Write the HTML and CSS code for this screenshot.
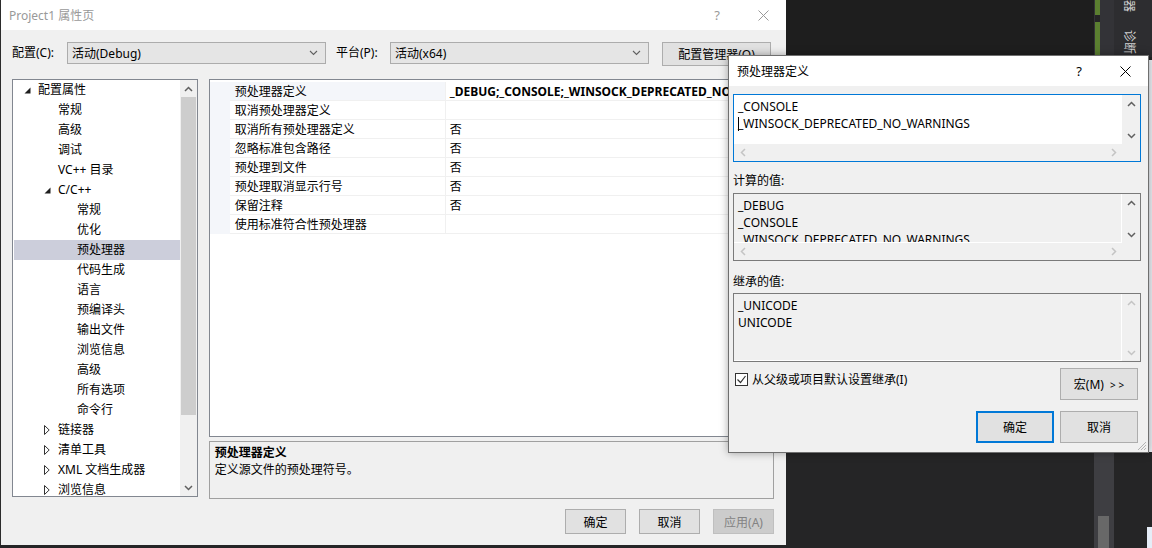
FILE: index.html
```html
<!DOCTYPE html>
<html lang="zh-CN">
<head>
    <meta charset="UTF-8">
    <title>Project1 属性页</title>
    <link rel="stylesheet" href="styles.css">
</head>
<body>
    <!-- IDE behind the dialogs -->
    <div class="ide">
        <div class="ide-editor">
            <div class="ide-top"></div>
            <div class="ide-body"></div>
        </div>
        <div class="ide-scroll">
            <div class="scroll-top"><span class="change-bar"></span></div>
            <div class="scroll-body"><span class="scroll-thumb"></span></div>
        </div>
        <div class="ide-tabs">
            <div class="tabs-top">
                <span class="vtab vtab-cut">理器</span>
                <span class="vtab">诊断</span>
            </div>
            <div class="tabs-body">
                <span class="tabs-gap"></span>
                <span class="tabs-edge"></span>
            </div>
        </div>
    </div>

    <!-- Property pages window -->
    <div class="window main-window">
        <div class="titlebar">
            <span class="title">Project1 属性页</span>
            <span class="tb-btn">?</span>
            <span class="tb-btn">
                <svg width="11" height="11" viewBox="0 0 11 11"><path d="M0.5 0.5l10 10M10.5 0.5l-10 10" stroke="#999" stroke-width="1"/></svg>
            </span>
        </div>

        <div class="main-body">
            <div class="config-row">
                <span class="row-label">配置(C):</span>
                <div class="combo combo-wide">
                    <span>活动(Debug)</span>
                    <svg width="9" height="6" viewBox="0 0 9 6"><path d="M1 1l3.5 3.5L8 1" fill="none" stroke="#606060" stroke-width="1.1"/></svg>
                </div>
                <span class="row-label platform-label">平台(P):</span>
                <div class="combo combo-wide">
                    <span>活动(x64)</span>
                    <svg width="9" height="6" viewBox="0 0 9 6"><path d="M1 1l3.5 3.5L8 1" fill="none" stroke="#606060" stroke-width="1.1"/></svg>
                </div>
                <button class="btn btn-manager">配置管理器(O)</button>
            </div>

            <div class="panes">
                <!-- Category tree -->
                <div class="tree">
                    <ul class="tree-list">
                        <li class="lv0"><span class="tog"><svg width="7" height="7" viewBox="0 0 7 7"><path d="M6.5 0.5V6.5H0.5Z" fill="#1e1e1e"/></svg></span>配置属性</li>
                        <li class="lv1"><span class="tog"></span>常规</li>
                        <li class="lv1"><span class="tog"></span>高级</li>
                        <li class="lv1"><span class="tog"></span>调试</li>
                        <li class="lv1"><span class="tog"></span>VC++ 目录</li>
                        <li class="lv1"><span class="tog"><svg width="7" height="7" viewBox="0 0 7 7"><path d="M6.5 0.5V6.5H0.5Z" fill="#1e1e1e"/></svg></span>C/C++</li>
                        <li class="lv2"><span class="tog"></span>常规</li>
                        <li class="lv2"><span class="tog"></span>优化</li>
                        <li class="lv2 selected"><span class="tog"></span>预处理器</li>
                        <li class="lv2"><span class="tog"></span>代码生成</li>
                        <li class="lv2"><span class="tog"></span>语言</li>
                        <li class="lv2"><span class="tog"></span>预编译头</li>
                        <li class="lv2"><span class="tog"></span>输出文件</li>
                        <li class="lv2"><span class="tog"></span>浏览信息</li>
                        <li class="lv2"><span class="tog"></span>高级</li>
                        <li class="lv2"><span class="tog"></span>所有选项</li>
                        <li class="lv2"><span class="tog"></span>命令行</li>
                        <li class="lv1"><span class="tog"><svg width="6" height="10" viewBox="0 0 6 10"><path d="M0.5 0.5L5.2 5L0.5 9.5Z" fill="none" stroke="#333"/></svg></span>链接器</li>
                        <li class="lv1"><span class="tog"><svg width="6" height="10" viewBox="0 0 6 10"><path d="M0.5 0.5L5.2 5L0.5 9.5Z" fill="none" stroke="#333"/></svg></span>清单工具</li>
                        <li class="lv1"><span class="tog"><svg width="6" height="10" viewBox="0 0 6 10"><path d="M0.5 0.5L5.2 5L0.5 9.5Z" fill="none" stroke="#333"/></svg></span>XML 文档生成器</li>
                        <li class="lv1"><span class="tog"><svg width="6" height="10" viewBox="0 0 6 10"><path d="M0.5 0.5L5.2 5L0.5 9.5Z" fill="none" stroke="#333"/></svg></span>浏览信息</li>
                    </ul>
                    <div class="tree-scroll">
                        <span class="arrow"><svg width="9" height="6" viewBox="0 0 9 6"><path d="M1 5l3.5-3.5L8 5" fill="none" stroke="#606060" stroke-width="1.5"/></svg></span>
                        <span class="tree-thumb"></span>
                        <span class="arrow"><svg width="9" height="6" viewBox="0 0 9 6"><path d="M1 1l3.5 3.5L8 1" fill="none" stroke="#606060" stroke-width="1.5"/></svg></span>
                    </div>
                </div>

                <div class="right-pane">
                    <!-- Property grid -->
                    <div class="grid">
                        <div class="prop-row current">
                            <span class="gutter"></span>
                            <span class="name">预处理器定义</span>
                            <span class="value strong">_DEBUG;_CONSOLE;_WINSOCK_DEPRECATED_NO_WARNINGS;%(PreprocessorDefinitions)</span>
                        </div>
                        <div class="prop-row">
                            <span class="gutter"></span>
                            <span class="name">取消预处理器定义</span>
                            <span class="value"></span>
                        </div>
                        <div class="prop-row">
                            <span class="gutter"></span>
                            <span class="name">取消所有预处理器定义</span>
                            <span class="value">否</span>
                        </div>
                        <div class="prop-row">
                            <span class="gutter"></span>
                            <span class="name">忽略标准包含路径</span>
                            <span class="value">否</span>
                        </div>
                        <div class="prop-row">
                            <span class="gutter"></span>
                            <span class="name">预处理到文件</span>
                            <span class="value">否</span>
                        </div>
                        <div class="prop-row">
                            <span class="gutter"></span>
                            <span class="name">预处理取消显示行号</span>
                            <span class="value">否</span>
                        </div>
                        <div class="prop-row">
                            <span class="gutter"></span>
                            <span class="name">保留注释</span>
                            <span class="value">否</span>
                        </div>
                        <div class="prop-row">
                            <span class="gutter"></span>
                            <span class="name">使用标准符合性预处理器</span>
                            <span class="value"></span>
                        </div>
                    </div>

                    <!-- Description -->
                    <div class="desc">
                        <div class="desc-title">预处理器定义</div>
                        <div>定义源文件的预处理符号。</div>
                    </div>
                </div>
            </div>

            <div class="footer-btns">
                <button class="btn btn-foot">确定</button>
                <button class="btn btn-foot">取消</button>
                <button class="btn btn-foot disabled">应用(A)</button>
            </div>
        </div>
    </div>

    <!-- Preprocessor definitions dialog -->
    <div class="window dialog">
        <div class="titlebar">
            <span class="title dlg-title">预处理器定义</span>
            <span class="tb-btn dlg-btn">?</span>
            <span class="tb-btn">
                <svg width="11" height="11" viewBox="0 0 11 11"><path d="M0.5 0.5l10 10M10.5 0.5l-10 10" stroke="#000" stroke-width="1"/></svg>
            </span>
        </div>

        <div class="dlg-body">
            <div class="textbox editable">
                <div class="tb-text">
                    <div>_CONSOLE</div>
                    <div><span class="caret"></span>_WINSOCK_DEPRECATED_NO_WARNINGS</div>
                </div>
                <div class="vbar">
                    <span class="arrow"><svg width="9" height="6" viewBox="0 0 9 6"><path d="M1 5l3.5-3.5L8 5" fill="none" stroke="#606060" stroke-width="1.5"/></svg></span>
                    <span class="arrow"><svg width="9" height="6" viewBox="0 0 9 6"><path d="M1 1l3.5 3.5L8 1" fill="none" stroke="#606060" stroke-width="1.5"/></svg></span>
                </div>
                <div class="hbar">
                    <span class="arrow"><svg width="6" height="9" viewBox="0 0 6 9"><path d="M5 1L1.5 4.5L5 8" fill="none" stroke="#c4c4c4" stroke-width="1.5"/></svg></span>
                    <span class="arrow"><svg width="6" height="9" viewBox="0 0 6 9"><path d="M1 1l3.5 3.5L1 8" fill="none" stroke="#c4c4c4" stroke-width="1.5"/></svg></span>
                </div>
                <div class="corner"></div>
            </div>

            <div class="field-label">计算的值:</div>
            <div class="textbox readonly">
                <div class="tb-text">
                    <div>_DEBUG</div>
                    <div>_CONSOLE</div>
                    <div>_WINSOCK_DEPRECATED_NO_WARNINGS</div>
                </div>
                <div class="vbar">
                    <span class="arrow"><svg width="9" height="6" viewBox="0 0 9 6"><path d="M1 5l3.5-3.5L8 5" fill="none" stroke="#606060" stroke-width="1.5"/></svg></span>
                    <span class="arrow"><svg width="9" height="6" viewBox="0 0 9 6"><path d="M1 1l3.5 3.5L8 1" fill="none" stroke="#606060" stroke-width="1.5"/></svg></span>
                </div>
                <div class="hbar">
                    <span class="arrow"><svg width="6" height="9" viewBox="0 0 6 9"><path d="M5 1L1.5 4.5L5 8" fill="none" stroke="#c4c4c4" stroke-width="1.5"/></svg></span>
                    <span class="arrow"><svg width="6" height="9" viewBox="0 0 6 9"><path d="M1 1l3.5 3.5L1 8" fill="none" stroke="#c4c4c4" stroke-width="1.5"/></svg></span>
                </div>
                <div class="corner"></div>
            </div>

            <div class="field-label inherit-label">继承的值:</div>
            <div class="textbox readonly no-hbar">
                <div class="tb-text">
                    <div>_UNICODE</div>
                    <div>UNICODE</div>
                </div>
                <div class="vbar">
                    <span class="arrow"><svg width="9" height="6" viewBox="0 0 9 6"><path d="M1 5l3.5-3.5L8 5" fill="none" stroke="#c4c4c4" stroke-width="1.5"/></svg></span>
                    <span class="arrow"><svg width="9" height="6" viewBox="0 0 9 6"><path d="M1 1l3.5 3.5L8 1" fill="none" stroke="#c4c4c4" stroke-width="1.5"/></svg></span>
                </div>
            </div>

            <div class="inherit-row">
                <label class="check">
                    <span class="check-box"><svg width="11" height="11" viewBox="0 0 11 11"><path d="M1.5 5.5l3 3L9.5 2" fill="none" stroke="#333" stroke-width="1.2"/></svg></span>
                    从父级或项目默认设置继承(I)
                </label>
                <button class="btn btn-dlg">宏(M) <span class="more">&gt; &gt;</span></button>
            </div>

            <div class="dlg-actions">
                <button class="btn btn-dlg default">确定</button>
                <button class="btn btn-dlg">取消</button>
            </div>
        </div>

        <svg class="grip" width="10" height="10" viewBox="0 0 10 10"><path d="M9 1L1 9M9 4L4 9M9 7L7 9" stroke="#b4b4b4" stroke-width="1"/></svg>
    </div>
</body>
</html>
```

FILE: styles.css
```css
* {
    box-sizing: border-box;
}

body {
    margin: 0;
    width: 1152px;
    height: 548px;
    overflow: hidden;
    position: relative;
    background-color: #1e1e1e;
    color: #000;
    font-family: "Noto Sans", "Noto Sans CJK SC", sans-serif;
    font-size: 12px;
    line-height: 17px;
}

/* IDE in the background */
.ide {
    display: flex;
    height: 548px;
}

.ide-editor {
    flex: 1;
    display: flex;
    flex-direction: column;
}

.ide-top {
    height: 57px;
    background: #1e1e1e;
}

.ide-body {
    flex: 1;
    background: #252526;
}

.ide-scroll {
    width: 20px;
    display: flex;
    flex-direction: column;
}

.scroll-top {
    height: 57px;
    display: flex;
    background: #333337;
}

.change-bar {
    width: 5px;
    margin-left: 1px;
    background: linear-gradient(#5b7f30 0 15px, #252526 15px 22px, #5b7f30 22px);
}

.scroll-body {
    flex: 1;
    display: flex;
    flex-direction: column;
    justify-content: flex-end;
    background: #3e3e42;
}

.scroll-thumb {
    width: 11px;
    height: 32px;
    margin-left: 4px;
    background: #686868;
}

.ide-tabs {
    width: 38px;
    display: flex;
    flex-direction: column;
}

.tabs-top {
    height: 57px;
    overflow: hidden;
    background: #2d2d30;
    display: flex;
    flex-direction: column;
    align-items: flex-start;
    padding-left: 8px;
}

.vtab {
    writing-mode: vertical-rl;
    text-orientation: sideways;
    color: #d0d0d0;
    font-size: 12px;
    line-height: 14px;
}

.vtab-cut {
    margin-top: -12px;
}

.vtab + .vtab {
    margin-top: 18px;
}

.tabs-body {
    flex: 1;
    display: flex;
}

.tabs-gap {
    flex: 1;
    background: #252526;
}

.tabs-edge {
    width: 5px;
    background: linear-gradient(#252526 0 3px, #eef1f6 3px 395px, #252526 395px 470px, #e6edf7 470px);
}

/* Shared window chrome */
.window {
    position: absolute;
    background: #f0f0f0;
    display: flex;
    flex-direction: column;
}

.titlebar {
    height: 30px;
    background: #fff;
    display: flex;
    align-items: center;
    flex-shrink: 0;
}

.title {
    flex: 1;
    padding-left: 8px;
    color: #999;
}

.tb-btn {
    width: 46px;
    height: 30px;
    display: flex;
    align-items: center;
    justify-content: center;
    color: #999;
    font-size: 13px;
}

.btn {
    font-family: inherit;
    font-size: 12px;
    color: #000;
    background: #e1e1e1;
    border: 1px solid #adadad;
    padding: 0;
    margin: 0;
}

/* Main property window */
.main-window {
    left: 0;
    top: 0;
    width: 786px;
    height: 545px;
    border-left: 1px solid #2b2b2b;
}

.main-body {
    padding: 12px 12px 0 11px;
}

.config-row {
    display: flex;
    align-items: flex-start;
    height: 23px;
}

.row-label {
    width: 55px;
    line-height: 22px;
}

.platform-label {
    width: 54px;
    margin-left: 10px;
}

.combo {
    height: 22px;
    border: 1px solid #acacac;
    background: #e5e5e5;
    display: flex;
    align-items: center;
    justify-content: space-between;
    padding: 0 7px 0 4px;
}

.combo-wide {
    width: 259px;
}

.btn-manager {
    width: 109px;
    height: 24px;
    margin-left: 13px;
}

.panes {
    display: flex;
    align-items: flex-start;
    margin-top: 14px;
}

/* Tree */
.tree {
    width: 186px;
    height: 418px;
    border: 1px solid #828790;
    background: #fff;
    display: flex;
    padding: 0 0 0 1px;
}

.tree-list {
    list-style: none;
    margin: 0;
    padding: 0;
    flex: 1;
    overflow: hidden;
}

.tree-list li {
    height: 20px;
    line-height: 20px;
    display: flex;
    align-items: center;
    white-space: nowrap;
}

.tree-list .lv0 {
    padding-left: 8px;
}

.tree-list .lv1 {
    padding-left: 28px;
}

.tree-list .lv2 {
    padding-left: 47px;
}

.tog {
    width: 16px;
    height: 20px;
    display: flex;
    align-items: center;
    padding-left: 2px;
}

.tree-list .selected {
    background: #cccedb;
}

.tree-scroll {
    width: 17px;
    background: #f0f0f0;
    display: flex;
    flex-direction: column;
}

.tree-scroll .arrow {
    height: 17px;
}

.tree-thumb {
    height: 318px;
    margin: 0 1px;
    background: #cdcdcd;
    margin-bottom: auto;
}

.arrow {
    display: flex;
    align-items: center;
    justify-content: center;
}

/* Property grid */
.right-pane {
    width: 566px;
    margin-left: 11px;
}

.grid {
    height: 358px;
    border: 1px solid #828790;
    background: #fff;
    padding-top: 2px;
    overflow: hidden;
}

.prop-row {
    display: grid;
    grid-template-columns: 20px 216px 1fr;
    height: 19px;
}

.prop-row span {
    line-height: 18px;
    padding-top: 1px;
    white-space: nowrap;
    overflow: hidden;
    border-bottom: 1px solid #f0f0f0;
}

.prop-row .gutter {
    background: #f4f6fa;
    border-bottom-color: #f4f6fa;
}

.prop-row .name {
    padding-left: 5px;
    border-right: 1px solid #f0f0f0;
}

.prop-row .value {
    padding-left: 4px;
}

.prop-row.current .name {
    background: #f4f6fa;
}

.strong {
    font-weight: bold;
}

.desc {
    height: 58px;
    margin-top: 4px;
    border: 1px solid #a0a0a0;
    padding: 2px 5px;
}

.desc-title {
    font-weight: bold;
}

.footer-btns {
    display: flex;
    justify-content: flex-end;
    gap: 13px;
    margin-top: 10px;
}

.btn-foot {
    width: 61px;
    height: 25px;
}

.btn-foot.disabled {
    background: #cccccc;
    border-color: #bfbfbf;
    color: #838383;
}

/* Dialog */
.dialog {
    left: 728px;
    top: 55px;
    width: 421px;
    height: 398px;
    border: 1px solid #6f6f6f;
    box-shadow: 0 0 8px rgba(0, 0, 0, 0.35);
}

.dlg-title {
    color: #000;
}

.dlg-btn {
    color: #000;
}

.dlg-body {
    padding: 8px 7px 0 4px;
}

.textbox {
    height: 68px;
    border: 1px solid #7a7a7a;
    display: grid;
    grid-template-columns: 1fr 18px;
    grid-template-rows: 1fr 17px;
}

.textbox.editable {
    border-color: #0078d7;
}

.textbox.no-hbar {
    height: 69px;
    grid-template-rows: 1fr;
}

.tb-text {
    padding: 3px 4px;
    overflow: hidden;
    white-space: nowrap;
    background: #fff;
}

.readonly .tb-text {
    background: #f0f0f0;
    border-right: 1px solid #fff;
    border-bottom: 1px solid #fff;
}

.caret {
    display: inline-block;
    width: 1px;
    height: 14px;
    margin-right: -1px;
    vertical-align: -3px;
    background: #000;
}

.vbar {
    background: #f0f0f0;
    display: flex;
    flex-direction: column;
    justify-content: space-between;
}

.vbar .arrow {
    height: 17px;
}

.hbar {
    background: #f0f0f0;
    display: flex;
    justify-content: space-between;
}

.hbar .arrow {
    width: 17px;
}

.corner {
    background: #f0f0f0;
}

.field-label {
    margin-top: 10px;
    margin-bottom: 4px;
}

.inherit-label {
    margin-top: 12px;
    margin-bottom: 3px;
}

.inherit-row {
    display: flex;
    justify-content: space-between;
    align-items: flex-start;
    margin-top: 6px;
    padding-right: 3px;
}

.check {
    display: flex;
    align-items: center;
    gap: 4px;
    margin-top: 3px;
    padding-left: 2px;
}

.check-box {
    width: 13px;
    height: 13px;
    border: 1px solid #333;
    background: #fff;
    display: flex;
    align-items: center;
    justify-content: center;
}

.btn-dlg {
    width: 78px;
    height: 32px;
}

.btn-dlg .more {
    font-size: 10px;
    margin-left: 3px;
}

.btn-dlg.default {
    border: 2px solid #0078d7;
}

.dlg-actions {
    display: flex;
    justify-content: flex-end;
    gap: 6px;
    margin-top: 11px;
    padding-right: 3px;
}

.grip {
    position: absolute;
    right: 1px;
    bottom: 1px;
}
```
